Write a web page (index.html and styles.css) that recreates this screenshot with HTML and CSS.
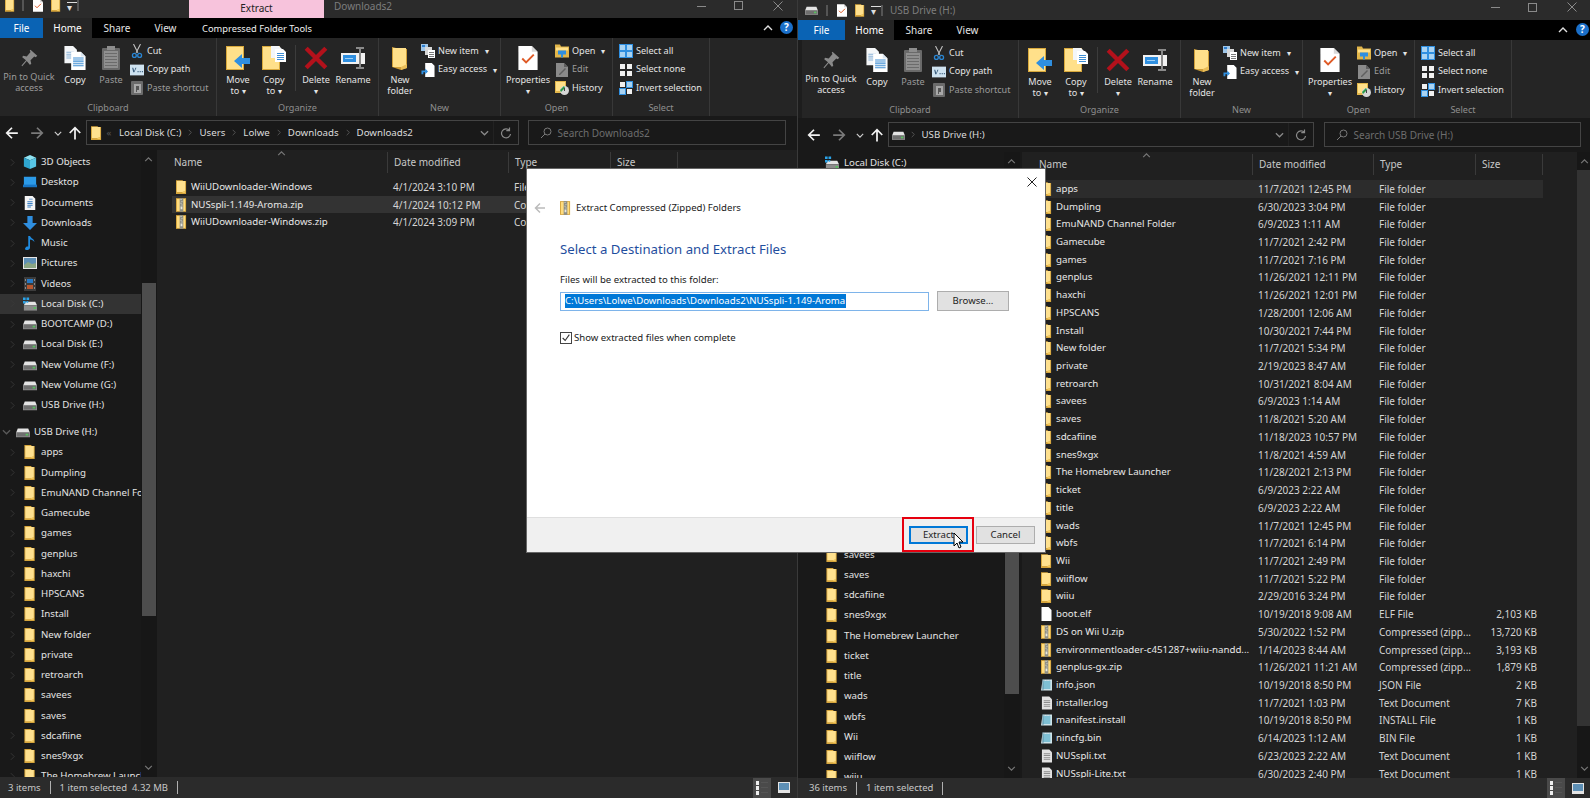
FILE: index.html
```html
<!DOCTYPE html>
<html lang="en">
<head>
<meta charset="utf-8">
<title>Extract Compressed (Zipped) Folders</title>
<link rel="stylesheet" href="styles.css">
</head>
<body>
<svg class="defs" aria-hidden="true">
  <symbol id="folder" viewBox="0 0 12 15"><path fill="#d6a53c" d="M0 0h7l1 1h3v14H0z"/><path fill="#ffe18f" d="M1 1h9v11l-3 1H1z"/><path fill="#f4c95e" d="M7 13l3-1v2H7z"/></symbol>
  <symbol id="zip" viewBox="0 0 12 15"><path fill="#d6a53c" d="M0 0h11v15H0z"/><path fill="#ffdc7e" d="M1 1h9v13H1z"/><path fill="#8f8f85" d="M4 0h4v15H4z"/><path fill="#e8e8de" d="M5 1h1v1H5zm1 2h1v1H6zM5 5h1v1H5zm1 2h1v1H6zM5 9h2v3H5z"/></symbol>
  <symbol id="drive" viewBox="0 0 16 12"><path fill="#e4e4e4" d="M2 2h12l2 5H0z"/><rect y="6" width="16" height="6" fill="#8c8c8c"/><rect x="1" y="7" width="14" height="4" fill="#6f6f6f"/><rect x="11" y="8" width="3" height="2" fill="#58c05f"/></symbol>
  <symbol id="windrive" viewBox="0 0 16 15"><path fill="#e4e4e4" d="M3 5h11l2 4H1z"/><rect y="9" x="1" width="15" height="6" fill="#8c8c8c"/><rect x="12" y="11" width="3" height="2" fill="#58c05f"/><path fill="#2ba3e8" d="M0 0h3v3H0zm4 0h3v3H4zM0 4h3v3H0zm4 0h2v2H4z"/></symbol>
  <symbol id="cube" viewBox="0 0 16 16"><path fill="#8fe3f2" d="M8 0l7 3-7 3-7-3z"/><path fill="#2fa5cf" d="M1 3l7 3v10l-7-3z"/><path fill="#58c6e6" d="M15 3L8 6v10l7-3z"/></symbol>
  <symbol id="desktop" viewBox="0 0 16 12"><rect width="14" height="10" x="1" fill="#2c9be8"/><rect y="9" x="0" width="16" height="3" fill="#1775c4"/></symbol>
  <symbol id="docs" viewBox="0 0 12 16"><path fill="#f5f5f5" d="M0 0h9l3 3v13H0z"/><path fill="#3a7fc4" d="M5 3h4v1H5zM3 6h6v1H3zM3 8h6v1H3zM3 10h6v1H3zM3 12h4v1H3z"/></symbol>
  <symbol id="down" viewBox="0 0 16 16"><path fill="#2f8fe0" d="M5 0h6v8h5l-8 8-8-8h5z"/></symbol>
  <symbol id="music" viewBox="0 0 12 16"><path fill="#1f8be0" d="M4 0h2c1 3 5 3 5 7-1-2-3-3-5-3v9c0 2-2 3-4 3s-2-2-1-3c1-1 2-1 3-1z"/></symbol>
  <symbol id="pics" viewBox="0 0 14 12"><rect width="14" height="12" fill="#e6e6e6"/><rect x="1" y="1" width="12" height="10" fill="#5d8fb5"/><path fill="#8aa583" d="M1 8l4-3 4 2 4-1v5H1z"/></symbol>
  <symbol id="video" viewBox="0 0 12 14"><rect width="12" height="14" fill="#3c3c3c"/><path fill="#2779c4" d="M3 2h6v4H3z"/><path fill="#b7572f" d="M3 8h6v4H3z"/><path fill="#8a8a8a" d="M1 2h1v2H1zm0 4h1v2H1zm0 4h1v2H1zm9-8h1v2h-1zm0 4h1v2h-1zm0 4h1v2h-1z"/></symbol>
  <symbol id="file" viewBox="0 0 10 14"><path fill="#fff" d="M0 0h7l3 3v11H0z"/></symbol>
  <symbol id="note" viewBox="0 0 12 14"><path fill="#e2e2e2" d="M1 0h8l3 3v11H1z"/><path fill="#8d8d8d" d="M3 4h7v1H3zm0 2h7v1H3zm0 2h7v1H3zm0 2h7v1H3z"/></symbol>
  <symbol id="ini" viewBox="0 0 14 14"><path fill="#cfe4ea" d="M2 0h12v14H0z"/><path fill="#7fc0d4" d="M3 2h9v10H2z"/><path fill="#4f7f95" d="M2 0h1v14H2zM4 0h1v1H4zm3 0h1v1H7zm3 0h1v1h-1z"/></symbol>
  <symbol id="chev" viewBox="0 0 6 10"><path fill="none" stroke="currentColor" d="M1 1l4 4-4 4"/></symbol>
  <symbol id="chevd" viewBox="0 0 10 6"><path fill="none" stroke="currentColor" stroke-width="1.4" d="M1 1l4 4 4-4"/></symbol>
  <symbol id="chevu" viewBox="0 0 10 6"><path fill="none" stroke="currentColor" stroke-width="1.4" d="M1 5l4-4 4 4"/></symbol>
  <symbol id="pin" viewBox="0 0 24 24"><path fill="#8a8a8a" d="M14 1l9 8-2 2-2-1-5 5 1 5-2 1-4-5-6 7-1-1 6-7-5-4 1-2 5 1 5-6-1-2z"/></symbol>
  <symbol id="copyb" viewBox="0 0 22 25"><path fill="#f4f6f8" d="M0 0h9l4 4v14H0z"/><path fill="#8cb4d8" d="M2 6h8v1H2zm0 2h8v1H2zm0 2h8v1H2zm0 2h8v1H2z"/><path fill="#fff" d="M7 6h10l5 5v14H7z"/><path fill="#dbe7f2" d="M17 6l5 5h-5z"/><path fill="#3f8ed4" d="M9 12h11v1H9zm0 2h11v1H9zm0 2h11v1H9zm0 2h11v1H9zm0 2h11v1H9z"/></symbol>
  <symbol id="paste" viewBox="0 0 18 24"><rect y="2" width="18" height="22" rx="1" fill="#6a6a6a"/><rect x="5" width="8" height="4" fill="#8d8d8d"/><rect x="2" y="5" width="14" height="17" fill="#8f8f8f"/><path fill="#6b6b6b" d="M3 7h12v1H3zm0 3h12v1H3zm0 3h12v1H3zm0 3h12v1H3zm0 3h12v1H3z"/></symbol>
  <symbol id="cut" viewBox="0 0 12 16"><path fill="none" stroke="#c4c4c4" stroke-width="1.2" d="M2 0l5 10M10 0L5 10"/><circle cx="3" cy="13" r="2.2" fill="none" stroke="#2a86d4" stroke-width="1.5"/><circle cx="9" cy="13" r="2.2" fill="none" stroke="#2a86d4" stroke-width="1.5"/></symbol>
  <symbol id="cpath" viewBox="0 0 13 10"><rect width="13" height="10" fill="#cfe3f1"/><path fill="#3b5e7e" d="M2 3h1l1 3 1-3h1L4 7H3zM7 6h1v1H7zm2 0h1v1H9zm2 0h1v1h-1z"/></symbol>
  <symbol id="pshort" viewBox="0 0 12 14"><rect width="12" height="14" y="0" rx="1" fill="#6b6b6b"/><rect x="3" y="3" width="7" height="9" fill="#a8a8a8"/><path fill="#555" d="M5 5h3v4H6v2H5z"/></symbol>
  <symbol id="moveto" viewBox="0 0 24 24"><path fill="#d9a93c" d="M0 0h18v24H0z"/><path fill="#ffe08a" d="M1 1h16v22H1z"/><path fill="#2f8fe0" d="M8 15l8-7v4h8v6h-8v4z"/></symbol>
  <symbol id="copyto" viewBox="0 0 24 24"><path fill="#d9a93c" d="M0 0h18v24H0z"/><path fill="#ffe08a" d="M1 1h16v22H1z"/><path fill="#f3f6f9" d="M9 0h8l3 3v9H9z"/><path fill="#fff" d="M13 3h8l3 3v10H13z"/><path fill="#3f8ed4" d="M15 7h7v1h-7zm0 2h7v1h-7zm0 2h7v1h-7zm0 2h7v1h-7z"/></symbol>
  <symbol id="del" viewBox="0 0 22 22"><path fill="none" stroke="#b3111b" stroke-width="4" d="M2 2l18 18M20 2L2 20"/></symbol>
  <symbol id="rename" viewBox="0 0 24 22"><rect y="6" width="24" height="11" fill="#f2f2f2"/><rect x="2" y="8" width="13" height="7" fill="#2f8fe0"/><path fill="#9fd0f5" d="M4 11h8v1H4z"/><path fill="#8a8a8a" d="M15 0h8v2h-3v18h3v2h-8v-2h3V2h-3z"/></symbol>
  <symbol id="newfolder" viewBox="0 0 16 24"><path fill="#cf9f3a" d="M0 1l8 2h7v19l-6 2-9-3z"/><path fill="#ffe08a" d="M1 2h13v19H1z"/><path fill="#e9bd58" d="M9 21l6-3v4l-6 2z"/></symbol>
  <symbol id="newitem" viewBox="0 0 14 14"><rect width="7" height="7" fill="#9fc6e8"/><rect x="4" y="3" width="7" height="8" fill="#d8d8d8"/><rect x="7" y="6" width="7" height="8" fill="#fff"/><path fill="#7a7a7a" d="M8 8h5v1H8zm0 2h5v1H8zm0 2h5v1H8z"/><path fill="#2f7fd0" d="M1 1h3v2H1z"/></symbol>
  <symbol id="easy" viewBox="0 0 14 15"><path fill="#fff" d="M4 0h7l3 3v12H4z"/><path fill="#2f8fe0" d="M0 8h4V6l3 3-3 3v-2H2v2H0z"/></symbol>
  <symbol id="prop" viewBox="0 0 20 25"><path fill="#fff" d="M0 0h14l6 6v19H0z"/><path fill="#d8d8d8" d="M14 0l6 6h-6z"/><path fill="none" stroke="#df5a26" stroke-width="2" d="M4 13l4 4 8-8"/></symbol>
  <symbol id="open" viewBox="0 0 14 13"><path fill="#e2b64a" d="M0 0h5l1 2h8v11H0z"/><path fill="#ffe08a" d="M1 3h12v3H1z"/><path fill="#2f8fe0" d="M3 6h8v4H8v3H6v-3H3z"/></symbol>
  <symbol id="edit" viewBox="0 0 12 14"><path fill="#8a8a8a" d="M0 0h8l4 4v10H0z"/><path fill="#5f5f5f" d="M8 0l4 4H8zM3 11l6-6 1 1-6 6H3z"/></symbol>
  <symbol id="hist" viewBox="0 0 14 14"><path fill="#e2b64a" d="M0 0h11v12H0z"/><path fill="#ffe08a" d="M1 1h9v9H1z"/><circle cx="9.5" cy="9.5" r="4.5" fill="#d6d6d6"/><path fill="#2c9a4a" d="M5 9l4-4 1 2-4 4z"/><path fill="#444" d="M9 7h1v3H9z"/></symbol>
  <symbol id="selall" viewBox="0 0 14 14"><rect width="14" height="14" fill="#2f8fe0"/><path fill="#a9d3f2" d="M1 1h5v5H1zm7 0h5v5H8zM1 8h5v5H1zm7 0h5v5H8z"/></symbol>
  <symbol id="selnone" viewBox="0 0 14 14"><path fill="#f0f0f0" d="M1 1h5v5H1zm7 0h5v5H8zM1 8h5v5H1zm7 0h5v5H8z"/></symbol>
  <symbol id="selinv" viewBox="0 0 14 14"><path fill="#2f8fe0" d="M7 0h7v7H7zM0 7h7v7H0z"/><path fill="#a9d3f2" d="M8 1h5v5H8zM1 8h5v5H1z"/><path fill="#f0f0f0" d="M1 1h5v5H1zm7 7h5v5H8z"/></symbol>
  <symbol id="back" viewBox="0 0 12 12"><path fill="none" stroke="currentColor" stroke-width="1.5" d="M11 6H1.5M6 1.5L1.5 6 6 10.5"/></symbol>
  <symbol id="fwd" viewBox="0 0 12 12"><path fill="none" stroke="currentColor" stroke-width="1.5" d="M1 6h9.5M6 1.5L10.5 6 6 10.5"/></symbol>
  <symbol id="up" viewBox="0 0 12 12"><path fill="none" stroke="currentColor" stroke-width="1.5" d="M6 11.5V1.5M1.5 6L6 1.5 10.5 6"/></symbol>
  <symbol id="refresh" viewBox="0 0 12 12"><path fill="none" stroke="currentColor" stroke-width="1.2" d="M9.5 3.5A4.5 4.5 0 1 0 10.5 7M9.5 .5v3.2H6.3"/></symbol>
  <symbol id="search" viewBox="0 0 12 12"><circle cx="7.5" cy="4.5" r="3.5" fill="none" stroke="currentColor"/><path stroke="currentColor" d="M5 7l-4 4"/></symbol>
  <symbol id="close" viewBox="0 0 10 10"><path fill="none" stroke="currentColor" d="M.5.5l9 9M9.5.5l-9 9"/></symbol>
  <symbol id="vdet" viewBox="0 0 12 14"><path fill="#eee" d="M0 0h3v4H0zm0 5h3v4H0zm0 5h3v4H0z"/><path fill="#555" d="M5 1h7v1H5zm0 5h7v1H5zm0 5h7v1H5z"/></symbol>
  <symbol id="vtile" viewBox="0 0 12 11"><rect width="12" height="11" fill="#e4e4e4"/><rect x="1" y="1" width="10" height="7" fill="#5d8fb5"/></symbol>
</svg>

<main class="desktop">

<section class="win win-a">
  <header class="title">
    <svg class="ti f"><use href="#folder"/></svg><i class="tsep"></i>
    <svg class="ti p"><use href="#prop"/></svg>
    <svg class="ti f"><use href="#folder"/></svg>
    <span class="qat">▾</span><i class="tsep"></i>
    <div class="ctx">Extract</div>
    <span class="ttext dim">Downloads2</span>
    <div class="caps">
      <i class="cap-min"></i><i class="cap-max"></i><svg class="cap-x"><use href="#close"/></svg>
    </div>
  </header>
  <nav class="tabs">
    <span class="tab file">File</span><span class="tab home">Home</span><span class="tab share">Share</span><span class="tab view">View</span>
    <span class="tab tools">Compressed Folder Tools</span>
    <span class="tabs-end"><svg class="collapse"><use href="#chevu"/></svg><b class="help">?</b></span>
  </nav>
  <div class="ribbon">
    <div class="grp g-clip">
      <div class="gbody">
        <div class="big w-pin dis"><svg class="bi bi-pin"><use href="#pin"/></svg><span>Pin to Quick<br>access</span></div>
        <div class="big w-copy"><svg class="bi"><use href="#copyb"/></svg><span>Copy</span></div>
        <div class="big w-paste dis"><svg class="bi"><use href="#paste"/></svg><span>Paste</span></div>
        <div class="smalls">
          <div class="sm"><svg class="si"><use href="#cut"/></svg>Cut</div>
          <div class="sm"><svg class="si"><use href="#cpath"/></svg>Copy path</div>
          <div class="sm dis"><svg class="si"><use href="#pshort"/></svg>Paste shortcut</div>
        </div>
      </div>
      <div class="glabel">Clipboard</div>
    </div>
    <div class="grp g-org">
      <div class="gbody">
        <div class="big w-move"><svg class="bi"><use href="#moveto"/></svg><span>Move<br>to <em>▾</em></span></div>
        <div class="big w-move"><svg class="bi"><use href="#copyto"/></svg><span>Copy<br>to <em>▾</em></span></div>
        <i class="vsep"></i>
        <div class="big w-move"><svg class="bi"><use href="#del"/></svg><span>Delete<br><em>▾</em></span></div>
        <div class="big w-ren"><svg class="bi"><use href="#rename"/></svg><span>Rename</span></div>
      </div>
      <div class="glabel">Organize</div>
    </div>
    <div class="grp g-new">
      <div class="gbody">
        <div class="big w-move"><svg class="bi"><use href="#newfolder"/></svg><span>New<br>folder</span></div>
        <div class="smalls s-new">
          <div class="sm"><svg class="si"><use href="#newitem"/></svg>New item <em>▾</em></div>
          <div class="sm"><svg class="si"><use href="#easy"/></svg>Easy access <em>▾</em></div>
        </div>
      </div>
      <div class="glabel">New</div>
    </div>
    <div class="grp g-open">
      <div class="gbody">
        <div class="big w-prop"><svg class="bi"><use href="#prop"/></svg><span>Properties<br><em>▾</em></span></div>
        <div class="smalls s-open">
          <div class="sm"><svg class="si"><use href="#open"/></svg>Open <em>▾</em></div>
          <div class="sm dis"><svg class="si"><use href="#edit"/></svg>Edit</div>
          <div class="sm"><svg class="si"><use href="#hist"/></svg>History</div>
        </div>
      </div>
      <div class="glabel">Open</div>
    </div>
    <div class="grp g-sel">
      <div class="gbody">
        <div class="smalls s-sel">
          <div class="sm"><svg class="si"><use href="#selall"/></svg>Select all</div>
          <div class="sm"><svg class="si"><use href="#selnone"/></svg>Select none</div>
          <div class="sm"><svg class="si"><use href="#selinv"/></svg>Invert selection</div>
        </div>
      </div>
      <div class="glabel">Select</div>
    </div>
  </div>
  <div class="addr">
    <div class="arrows">
      <svg class="ar on"><use href="#back"/></svg><svg class="ar"><use href="#fwd"/></svg><svg class="ar-d"><use href="#chevd"/></svg><svg class="ar on"><use href="#up"/></svg>
    </div>
    <div class="box pathbox">
      <svg class="ai"><use href="#folder"/></svg><span class="cr dimmer">«</span>
      <span>Local Disk (C:)</span><svg class="crumb"><use href="#chev"/></svg>
      <span>Users</span><svg class="crumb"><use href="#chev"/></svg>
      <span>Lolwe</span><svg class="crumb"><use href="#chev"/></svg>
      <span>Downloads</span><svg class="crumb"><use href="#chev"/></svg>
      <span>Downloads2</span>
      <span class="boxend"><svg class="bd"><use href="#chevd"/></svg><i class="bs"></i><svg class="br"><use href="#refresh"/></svg></span>
    </div>
    <div class="box search"><svg class="sic"><use href="#search"/></svg><span>Search Downloads2</span></div>
  </div>
  <div class="work">
    <aside class="tree tree-a">
      <div class="tscroll">
        <ul class="nodes">
          <li><svg class="cv"><use href="#chev"/></svg><svg class="ni"><use href="#cube"/></svg>3D Objects</li>
          <li><svg class="cv"><use href="#chev"/></svg><svg class="ni"><use href="#desktop"/></svg>Desktop</li>
          <li><svg class="cv"><use href="#chev"/></svg><svg class="ni"><use href="#docs"/></svg>Documents</li>
          <li><svg class="cv"><use href="#chev"/></svg><svg class="ni"><use href="#down"/></svg>Downloads</li>
          <li><svg class="cv"><use href="#chev"/></svg><svg class="ni"><use href="#music"/></svg>Music</li>
          <li><svg class="cv"><use href="#chev"/></svg><svg class="ni"><use href="#pics"/></svg>Pictures</li>
          <li><svg class="cv"><use href="#chev"/></svg><svg class="ni"><use href="#video"/></svg>Videos</li>
          <li class="cur"><svg class="cv"><use href="#chev"/></svg><svg class="ni"><use href="#windrive"/></svg>Local Disk (C:)</li>
          <li><svg class="cv"><use href="#chev"/></svg><svg class="ni"><use href="#drive"/></svg>BOOTCAMP (D:)</li>
          <li><svg class="cv"><use href="#chev"/></svg><svg class="ni"><use href="#drive"/></svg>Local Disk (E:)</li>
          <li><svg class="cv"><use href="#chev"/></svg><svg class="ni"><use href="#drive"/></svg>New Volume (F:)</li>
          <li><svg class="cv"><use href="#chev"/></svg><svg class="ni"><use href="#drive"/></svg>New Volume (G:)</li>
          <li><svg class="cv"><use href="#chev"/></svg><svg class="ni"><use href="#drive"/></svg>USB Drive (H:)</li>
          <li class="root"><svg class="cvd"><use href="#chevd"/></svg><svg class="ni"><use href="#drive"/></svg>USB Drive (H:)</li>
          <li><svg class="cv"><use href="#chev"/></svg><svg class="ni"><use href="#folder"/></svg>apps</li>
          <li><svg class="cv"><use href="#chev"/></svg><svg class="ni"><use href="#folder"/></svg>Dumpling</li>
          <li><svg class="cv"><use href="#chev"/></svg><svg class="ni"><use href="#folder"/></svg>EmuNAND Channel Folder</li>
          <li><svg class="cv"><use href="#chev"/></svg><svg class="ni"><use href="#folder"/></svg>Gamecube</li>
          <li><svg class="cv"><use href="#chev"/></svg><svg class="ni"><use href="#folder"/></svg>games</li>
          <li><svg class="cv"><use href="#chev"/></svg><svg class="ni"><use href="#folder"/></svg>genplus</li>
          <li><svg class="cv"><use href="#chev"/></svg><svg class="ni"><use href="#folder"/></svg>haxchi</li>
          <li><svg class="cv"><use href="#chev"/></svg><svg class="ni"><use href="#folder"/></svg>HPSCANS</li>
          <li><svg class="cv"><use href="#chev"/></svg><svg class="ni"><use href="#folder"/></svg>Install</li>
          <li><svg class="cv"><use href="#chev"/></svg><svg class="ni"><use href="#folder"/></svg>New folder</li>
          <li><svg class="cv"><use href="#chev"/></svg><svg class="ni"><use href="#folder"/></svg>private</li>
          <li><svg class="cv"><use href="#chev"/></svg><svg class="ni"><use href="#folder"/></svg>retroarch</li>
          <li><span class="cv"></span><svg class="ni"><use href="#folder"/></svg>savees</li>
          <li><span class="cv"></span><svg class="ni"><use href="#folder"/></svg>saves</li>
          <li><svg class="cv"><use href="#chev"/></svg><svg class="ni"><use href="#folder"/></svg>sdcafiine</li>
          <li><svg class="cv"><use href="#chev"/></svg><svg class="ni"><use href="#folder"/></svg>snes9xgx</li>
          <li><svg class="cv"><use href="#chev"/></svg><svg class="ni"><use href="#folder"/></svg>The Homebrew Launcher</li>
        </ul>
      </div>
      <div class="sbar sbar-a"><svg class="sb-u"><use href="#chevu"/></svg><i class="thumb"></i><svg class="sb-d"><use href="#chevd"/></svg></div>
    </aside>
    <div class="list">
      <div class="lhead">
        <span class="hc">Name<svg class="sort"><use href="#chevu"/></svg></span><span class="hc">Date modified</span><span class="hc">Type</span><span class="hc">Size</span>
      </div>
      <div class="rows">
        <div class="row"><span class="n"><svg class="fi"><use href="#folder"/></svg>WiiUDownloader-Windows</span><span>4/1/2024 3:10 PM</span><span>File folder</span><span class="sz"></span></div>
        <div class="row sel"><span class="n"><svg class="fi"><use href="#zip"/></svg>NUSspli-1.149-Aroma.zip</span><span>4/1/2024 10:12 PM</span><span>Compressed (zipp...</span><span class="sz">4,424 KB</span></div>
        <div class="row"><span class="n"><svg class="fi"><use href="#zip"/></svg>WiiUDownloader-Windows.zip</span><span>4/1/2024 3:09 PM</span><span>Compressed (zipp...</span><span class="sz">18,321 KB</span></div>
      </div>
    </div>
  </div>
  <footer class="status">
    <span>3 items</span><i class="bar"></i><span>1 item selected&nbsp; 4.32 MB</span><i class="bar"></i>
    <span class="views"><span class="vb on"><svg class="vd"><use href="#vdet"/></svg></span><span class="vb"><svg class="vt"><use href="#vtile"/></svg></span></span>
  </footer>
</section>

<section class="win win-b">
  <header class="title">
    <svg class="ti d"><use href="#drive"/></svg><i class="tsep"></i>
    <svg class="ti p"><use href="#prop"/></svg>
    <svg class="ti f"><use href="#folder"/></svg>
    <span class="qat">▾</span><i class="tsep"></i>
    <span class="ttext dim">USB Drive (H:)</span>
    <div class="caps">
      <i class="cap-min"></i><i class="cap-max"></i><svg class="cap-x"><use href="#close"/></svg>
    </div>
  </header>
  <nav class="tabs">
    <span class="tab file">File</span><span class="tab home">Home</span><span class="tab share">Share</span><span class="tab view">View</span>
    <span class="tabs-end"><svg class="collapse"><use href="#chevu"/></svg><b class="help">?</b></span>
  </nav>
  <div class="ribbon">
    <div class="grp g-clip">
      <div class="gbody">
        <div class="big w-pin"><svg class="bi bi-pin"><use href="#pin"/></svg><span>Pin to Quick<br>access</span></div>
        <div class="big w-copy"><svg class="bi"><use href="#copyb"/></svg><span>Copy</span></div>
        <div class="big w-paste dis"><svg class="bi"><use href="#paste"/></svg><span>Paste</span></div>
        <div class="smalls">
          <div class="sm"><svg class="si"><use href="#cut"/></svg>Cut</div>
          <div class="sm"><svg class="si"><use href="#cpath"/></svg>Copy path</div>
          <div class="sm dis"><svg class="si"><use href="#pshort"/></svg>Paste shortcut</div>
        </div>
      </div>
      <div class="glabel">Clipboard</div>
    </div>
    <div class="grp g-org">
      <div class="gbody">
        <div class="big w-move"><svg class="bi"><use href="#moveto"/></svg><span>Move<br>to <em>▾</em></span></div>
        <div class="big w-move"><svg class="bi"><use href="#copyto"/></svg><span>Copy<br>to <em>▾</em></span></div>
        <i class="vsep"></i>
        <div class="big w-move"><svg class="bi"><use href="#del"/></svg><span>Delete<br><em>▾</em></span></div>
        <div class="big w-ren"><svg class="bi"><use href="#rename"/></svg><span>Rename</span></div>
      </div>
      <div class="glabel">Organize</div>
    </div>
    <div class="grp g-new">
      <div class="gbody">
        <div class="big w-move"><svg class="bi"><use href="#newfolder"/></svg><span>New<br>folder</span></div>
        <div class="smalls s-new">
          <div class="sm"><svg class="si"><use href="#newitem"/></svg>New item <em>▾</em></div>
          <div class="sm"><svg class="si"><use href="#easy"/></svg>Easy access <em>▾</em></div>
        </div>
      </div>
      <div class="glabel">New</div>
    </div>
    <div class="grp g-open">
      <div class="gbody">
        <div class="big w-prop"><svg class="bi"><use href="#prop"/></svg><span>Properties<br><em>▾</em></span></div>
        <div class="smalls s-open">
          <div class="sm"><svg class="si"><use href="#open"/></svg>Open <em>▾</em></div>
          <div class="sm dis"><svg class="si"><use href="#edit"/></svg>Edit</div>
          <div class="sm"><svg class="si"><use href="#hist"/></svg>History</div>
        </div>
      </div>
      <div class="glabel">Open</div>
    </div>
    <div class="grp g-sel">
      <div class="gbody">
        <div class="smalls s-sel">
          <div class="sm"><svg class="si"><use href="#selall"/></svg>Select all</div>
          <div class="sm"><svg class="si"><use href="#selnone"/></svg>Select none</div>
          <div class="sm"><svg class="si"><use href="#selinv"/></svg>Invert selection</div>
        </div>
      </div>
      <div class="glabel">Select</div>
    </div>
  </div>
  <div class="addr">
    <div class="arrows">
      <svg class="ar on"><use href="#back"/></svg><svg class="ar"><use href="#fwd"/></svg><svg class="ar-d"><use href="#chevd"/></svg><svg class="ar on"><use href="#up"/></svg>
    </div>
    <div class="box pathbox">
      <svg class="ai ai-d"><use href="#drive"/></svg><svg class="crumb"><use href="#chev"/></svg>
      <span>USB Drive (H:)</span>
      <span class="boxend"><svg class="bd"><use href="#chevd"/></svg><i class="bs"></i><svg class="br"><use href="#refresh"/></svg></span>
    </div>
    <div class="box search"><svg class="sic"><use href="#search"/></svg><span>Search USB Drive (H:)</span></div>
  </div>
  <div class="work">
    <aside class="tree tree-b">
      <div class="tscroll">
        <ul class="nodes">
          <li><span class="cv"></span><svg class="ni"><use href="#windrive"/></svg>Local Disk (C:)</li>
          <li><span class="cv"></span><svg class="ni"><use href="#drive"/></svg>BOOTCAMP (D:)</li>
          <li><span class="cv"></span><svg class="ni"><use href="#drive"/></svg>Local Disk (E:)</li>
          <li><span class="cv"></span><svg class="ni"><use href="#drive"/></svg>New Volume (F:)</li>
          <li><span class="cv"></span><svg class="ni"><use href="#drive"/></svg>New Volume (G:)</li>
          <li><span class="cv"></span><svg class="ni"><use href="#drive"/></svg>USB Drive (H:)</li>
          <li class="root"><span class="cv"></span><svg class="ni"><use href="#drive"/></svg>USB Drive (H:)</li>
          <li><span class="cv"></span><svg class="ni"><use href="#folder"/></svg>apps</li>
          <li><span class="cv"></span><svg class="ni"><use href="#folder"/></svg>Dumpling</li>
          <li><span class="cv"></span><svg class="ni"><use href="#folder"/></svg>EmuNAND Channel Folder</li>
          <li><span class="cv"></span><svg class="ni"><use href="#folder"/></svg>Gamecube</li>
          <li><span class="cv"></span><svg class="ni"><use href="#folder"/></svg>games</li>
          <li><span class="cv"></span><svg class="ni"><use href="#folder"/></svg>genplus</li>
          <li><span class="cv"></span><svg class="ni"><use href="#folder"/></svg>haxchi</li>
          <li><span class="cv"></span><svg class="ni"><use href="#folder"/></svg>HPSCANS</li>
          <li><span class="cv"></span><svg class="ni"><use href="#folder"/></svg>Install</li>
          <li><span class="cv"></span><svg class="ni"><use href="#folder"/></svg>New folder</li>
          <li><span class="cv"></span><svg class="ni"><use href="#folder"/></svg>private</li>
          <li><span class="cv"></span><svg class="ni"><use href="#folder"/></svg>retroarch</li>
          <li><span class="cv"></span><svg class="ni"><use href="#folder"/></svg>savees</li>
          <li><span class="cv"></span><svg class="ni"><use href="#folder"/></svg>saves</li>
          <li><span class="cv"></span><svg class="ni"><use href="#folder"/></svg>sdcafiine</li>
          <li><span class="cv"></span><svg class="ni"><use href="#folder"/></svg>snes9xgx</li>
          <li><span class="cv"></span><svg class="ni"><use href="#folder"/></svg>The Homebrew Launcher</li>
          <li><span class="cv"></span><svg class="ni"><use href="#folder"/></svg>ticket</li>
          <li><span class="cv"></span><svg class="ni"><use href="#folder"/></svg>title</li>
          <li><span class="cv"></span><svg class="ni"><use href="#folder"/></svg>wads</li>
          <li><span class="cv"></span><svg class="ni"><use href="#folder"/></svg>wbfs</li>
          <li><span class="cv"></span><svg class="ni"><use href="#folder"/></svg>Wii</li>
          <li><span class="cv"></span><svg class="ni"><use href="#folder"/></svg>wiiflow</li>
          <li><span class="cv"></span><svg class="ni"><use href="#folder"/></svg>wiiu</li>
        </ul>
      </div>
      <div class="sbar sbar-b"><svg class="sb-u"><use href="#chevu"/></svg><i class="thumb"></i><svg class="sb-d"><use href="#chevd"/></svg></div>
    </aside>
    <div class="list">
      <div class="lhead">
        <span class="hc">Name<svg class="sort"><use href="#chevu"/></svg></span><span class="hc">Date modified</span><span class="hc">Type</span><span class="hc">Size</span>
      </div>
      <div class="rows">
        <div class="row hov"><span class="n"><svg class="fi"><use href="#folder"/></svg>apps</span><span>11/7/2021 12:45 PM</span><span>File folder</span><span class="sz"></span></div>
        <div class="row"><span class="n"><svg class="fi"><use href="#folder"/></svg>Dumpling</span><span>6/30/2023 3:04 PM</span><span>File folder</span><span class="sz"></span></div>
        <div class="row"><span class="n"><svg class="fi"><use href="#folder"/></svg>EmuNAND Channel Folder</span><span>6/9/2023 1:11 AM</span><span>File folder</span><span class="sz"></span></div>
        <div class="row"><span class="n"><svg class="fi"><use href="#folder"/></svg>Gamecube</span><span>11/7/2021 2:42 PM</span><span>File folder</span><span class="sz"></span></div>
        <div class="row"><span class="n"><svg class="fi"><use href="#folder"/></svg>games</span><span>11/7/2021 7:16 PM</span><span>File folder</span><span class="sz"></span></div>
        <div class="row"><span class="n"><svg class="fi"><use href="#folder"/></svg>genplus</span><span>11/26/2021 12:11 PM</span><span>File folder</span><span class="sz"></span></div>
        <div class="row"><span class="n"><svg class="fi"><use href="#folder"/></svg>haxchi</span><span>11/26/2021 12:01 PM</span><span>File folder</span><span class="sz"></span></div>
        <div class="row"><span class="n"><svg class="fi"><use href="#folder"/></svg>HPSCANS</span><span>1/28/2001 12:06 AM</span><span>File folder</span><span class="sz"></span></div>
        <div class="row"><span class="n"><svg class="fi"><use href="#folder"/></svg>Install</span><span>10/30/2021 7:44 PM</span><span>File folder</span><span class="sz"></span></div>
        <div class="row"><span class="n"><svg class="fi"><use href="#folder"/></svg>New folder</span><span>11/7/2021 5:34 PM</span><span>File folder</span><span class="sz"></span></div>
        <div class="row"><span class="n"><svg class="fi"><use href="#folder"/></svg>private</span><span>2/19/2023 8:47 AM</span><span>File folder</span><span class="sz"></span></div>
        <div class="row"><span class="n"><svg class="fi"><use href="#folder"/></svg>retroarch</span><span>10/31/2021 8:04 AM</span><span>File folder</span><span class="sz"></span></div>
        <div class="row"><span class="n"><svg class="fi"><use href="#folder"/></svg>savees</span><span>6/9/2023 1:14 AM</span><span>File folder</span><span class="sz"></span></div>
        <div class="row"><span class="n"><svg class="fi"><use href="#folder"/></svg>saves</span><span>11/8/2021 5:20 AM</span><span>File folder</span><span class="sz"></span></div>
        <div class="row"><span class="n"><svg class="fi"><use href="#folder"/></svg>sdcafiine</span><span>11/18/2023 10:57 PM</span><span>File folder</span><span class="sz"></span></div>
        <div class="row"><span class="n"><svg class="fi"><use href="#folder"/></svg>snes9xgx</span><span>11/8/2021 4:59 AM</span><span>File folder</span><span class="sz"></span></div>
        <div class="row"><span class="n"><svg class="fi"><use href="#folder"/></svg>The Homebrew Launcher</span><span>11/28/2021 2:13 PM</span><span>File folder</span><span class="sz"></span></div>
        <div class="row"><span class="n"><svg class="fi"><use href="#folder"/></svg>ticket</span><span>6/9/2023 2:22 AM</span><span>File folder</span><span class="sz"></span></div>
        <div class="row"><span class="n"><svg class="fi"><use href="#folder"/></svg>title</span><span>6/9/2023 2:22 AM</span><span>File folder</span><span class="sz"></span></div>
        <div class="row"><span class="n"><svg class="fi"><use href="#folder"/></svg>wads</span><span>11/7/2021 12:45 PM</span><span>File folder</span><span class="sz"></span></div>
        <div class="row"><span class="n"><svg class="fi"><use href="#folder"/></svg>wbfs</span><span>11/7/2021 6:14 PM</span><span>File folder</span><span class="sz"></span></div>
        <div class="row"><span class="n"><svg class="fi"><use href="#folder"/></svg>Wii</span><span>11/7/2021 2:49 PM</span><span>File folder</span><span class="sz"></span></div>
        <div class="row"><span class="n"><svg class="fi"><use href="#folder"/></svg>wiiflow</span><span>11/7/2021 5:22 PM</span><span>File folder</span><span class="sz"></span></div>
        <div class="row"><span class="n"><svg class="fi"><use href="#folder"/></svg>wiiu</span><span>2/29/2016 3:24 PM</span><span>File folder</span><span class="sz"></span></div>
        <div class="row"><span class="n"><svg class="fi"><use href="#file"/></svg>boot.elf</span><span>10/19/2018 9:08 AM</span><span>ELF File</span><span class="sz">2,103 KB</span></div>
        <div class="row"><span class="n"><svg class="fi"><use href="#zip"/></svg>DS on Wii U.zip</span><span>5/30/2022 1:52 PM</span><span>Compressed (zipp...</span><span class="sz">13,720 KB</span></div>
        <div class="row"><span class="n"><svg class="fi"><use href="#zip"/></svg>environmentloader-c451287+wiiu-nandd...</span><span>1/14/2023 8:44 AM</span><span>Compressed (zipp...</span><span class="sz">3,193 KB</span></div>
        <div class="row"><span class="n"><svg class="fi"><use href="#zip"/></svg>genplus-gx.zip</span><span>11/26/2021 11:21 AM</span><span>Compressed (zipp...</span><span class="sz">1,879 KB</span></div>
        <div class="row"><span class="n"><svg class="fi"><use href="#ini"/></svg>info.json</span><span>10/19/2018 8:50 PM</span><span>JSON File</span><span class="sz">2 KB</span></div>
        <div class="row"><span class="n"><svg class="fi"><use href="#note"/></svg>installer.log</span><span>11/7/2021 1:03 PM</span><span>Text Document</span><span class="sz">7 KB</span></div>
        <div class="row"><span class="n"><svg class="fi"><use href="#ini"/></svg>manifest.install</span><span>10/19/2018 8:50 PM</span><span>INSTALL File</span><span class="sz">1 KB</span></div>
        <div class="row"><span class="n"><svg class="fi"><use href="#ini"/></svg>nincfg.bin</span><span>6/14/2023 1:12 AM</span><span>BIN File</span><span class="sz">1 KB</span></div>
        <div class="row"><span class="n"><svg class="fi"><use href="#note"/></svg>NUSspli.txt</span><span>6/23/2023 2:22 AM</span><span>Text Document</span><span class="sz">1 KB</span></div>
        <div class="row"><span class="n"><svg class="fi"><use href="#note"/></svg>NUSspli-Lite.txt</span><span>6/30/2023 2:40 PM</span><span>Text Document</span><span class="sz">1 KB</span></div>
      </div>
      <div class="sbar sbar-m"><svg class="sb-u"><use href="#chevu"/></svg><i class="thumb"></i><svg class="sb-d"><use href="#chevd"/></svg></div>
    </div>
  </div>
  <footer class="status">
    <span>36 items</span><i class="bar"></i><span>1 item selected</span><i class="bar"></i>
    <span class="views"><span class="vb on"><svg class="vd"><use href="#vdet"/></svg></span><span class="vb"><svg class="vt"><use href="#vtile"/></svg></span></span>
  </footer>
</section>

</main>

<div class="dialog" role="dialog">
  <div class="dclose"><svg class="dx"><use href="#close"/></svg></div>
  <div class="dhead"><svg class="dback"><use href="#back"/></svg><svg class="dzip"><use href="#zip"/></svg><span>Extract Compressed (Zipped) Folders</span></div>
  <div class="dbody">
    <h1 class="dh">Select a Destination and Extract Files</h1>
    <div class="dlabel">Files will be extracted to this folder:</div>
    <div class="drow">
      <div class="dinput"><span class="dsel">C:\Users\Lolwe\Downloads\Downloads2\NUSspli-1.149-Aroma</span></div>
      <span class="btn browse">Browse...</span>
    </div>
    <div class="dcheck"><span class="cb"><svg viewBox="0 0 12 12"><path fill="none" stroke="#333" stroke-width="1.3" d="M2 6l3 3 5-7"/></svg></span>Show extracted files when complete</div>
  </div>
  <div class="dfoot">
    <span class="btn extract">Extract</span><span class="btn cancel">Cancel</span>
    <i class="redbox"></i>
    <svg class="cursor" viewBox="0 0 12 18"><path fill="#fff" stroke="#000" d="M1 1v13l3-3 2 5 2-1-2-5h4z"/></svg>
  </div>
</div>
</body>
</html>
```

FILE: styles.css
```css
* { box-sizing: border-box; }
html, body { margin: 0; height: 100%; }
body {
  position: relative;
  width: 1590px;
  height: 798px;
  overflow: hidden;
  background: #191919;
  font: 10px/1.2 "Noto Sans", "Open Sans", sans-serif;
  color: #e4e4e4;
}
.defs { position: absolute; width: 0; height: 0; }
ul { list-style: none; margin: 0; padding: 0; }
em { font-style: normal; font-size: 8px; }
i { display: block; font-style: normal; }

.desktop { display: flex; height: 798px; }
.win { display: flex; flex-direction: column; height: 798px; overflow: hidden; }
.win-a { width: 798px; border-right: 1px solid #3a3a3a; --inset: 0px; --title: 18px; --status: 21px; --tree: 157px; --titlex: 5px; }
.win-b { width: 792px; --inset: 4px; --title: 20px; --status: 20px; --tree: 220px; --titlex: 7px; }

/* title bar */
.title { flex: none; height: var(--title); background: #2b2b2b; display: flex; align-items: center; position: relative; padding-left: var(--titlex); overflow: visible; }
.win-a .title { align-items: flex-start; }
.ti { display: block; margin-right: 8px; }
.ti.f { width: 10px; height: 13px; }
.win-a .ti { margin-top: -1px; }
.ti.p { width: 10px; height: 13px; }
.ti.d { width: 13px; height: 10px; }
.qat { color: #ddd; font-size: 10px; width: 10px; margin-left: -2px; border-top: 1px solid #ddd; line-height: 8px; height: 10px; margin-top: 2px; }
.tsep { width: 2px; height: 11px; background: #555; margin: 0 9px 0 0; }
.win-a .ti:first-child { margin-right: 7px; }
.win-b .ttext { margin-left: -2px; }
.ctx { position: absolute; left: 189px; top: 0; width: 135px; height: 18px; background: #f7c3dc; color: #222; text-align: center; line-height: 16px; }
.win-a .ttext { position: absolute; left: 334px; top: 0; line-height: 13px; }
.dim { color: #7d7d7d; }
.caps { position: absolute; right: 0; top: 0; width: 110px; height: 100%; }
.cap-min { position: absolute; left: 10px; top: 6px; width: 9px; height: 1px; background: #8a8a8a; }
.cap-max { position: absolute; left: 47px; top: 1px; width: 9px; height: 9px; border: 1px solid #8a8a8a; }
.cap-x { position: absolute; left: 86px; top: 1px; width: 10px; height: 10px; color: #8a8a8a; }
.win-b .cap-min { top: 7px; left: 11px; }
.win-b .cap-max { top: 3px; left: 48px; }
.win-b .cap-x { left: 87px; top: 2px; }

/* tabs */
.tabs { flex: none; height: 20px; background: #000; display: flex; align-items: stretch; position: relative; }
.tab { display: block; text-align: center; line-height: 21px; }
.tab.file { width: 43px; background: #0a63b4; color: #fff; }
.tab.home { width: 49px; background: #252525; color: #fff; }
.win-b .tab.file { width: 47px; }
.tab.share { width: 50px; } .tab.view { width: 47px; }
.tab.tools { position: absolute; left: 190px; width: 134px; color: #f0f0f0; white-space: nowrap; font-size: 9.3px; }
.tabs-end { position: absolute; right: 0; top: 0; height: 100%; }
.collapse { position: absolute; right: 24px; top: 7px; width: 10px; height: 6px; color: #e0e0e0; }
.help { position: absolute; right: 4px; top: 3px; width: 13px; height: 13px; border-radius: 50%; background: #1a6fc9; color: #fff; font-size: 10px; line-height: 13px; text-align: center; }
.win-b .collapse { right: 22px; }
.win-b .help { right: 1px; }

/* ribbon */
.ribbon { flex: none; height: 78px; background: #252525; display: flex; padding-left: var(--inset); font-size: 9.1px; }
.win-b .ribbon { background: linear-gradient(90deg, #1d1d1d 4px, #252525 4px); }
.grp { display: flex; flex-direction: column; border-right: 1px solid #383838; }
.g-clip { width: 217px; } .g-org { width: 162px; } .g-new { width: 122px; } .g-open { width: 112px; } .g-sel { width: 97px; }
.gbody { flex: none; height: 61px; display: flex; }
.glabel { text-align: center; color: #8f8f8f; line-height: 16px; padding-top: 1px; }
.big { text-align: center; padding-top: 8px; line-height: 11.3px; flex: none; }
.big span { display: block; margin-top: 4px; white-space: nowrap; }
.bi { display: block; width: 24px; height: 24px; margin: 0 auto; }
.bi-pin { width: 18px; height: 18px; margin: 3px auto; }
.w-pin { width: 56px; margin-left: 1px; } .w-copy { width: 36px; } .w-paste { width: 36px; }
.w-move { width: 36px; } .w-ren { width: 38px; } .w-prop { width: 50px; }
.g-org .gbody, .g-new .gbody { padding-left: 3px; }
.g-open .gbody { padding-left: 2px; }
.vsep { width: 1px; height: 46px; background: #3c3c3c; margin: 7px 2px 0 3px; flex: none; }
.dis { color: #9c9c9c; }
.smalls { padding: 4px 0 0 1px; }
.s-new { padding-left: 3px; } .s-open { padding-left: 2px; } .s-sel { padding-left: 6px; }
.sm { display: flex; align-items: center; height: 18.5px; white-space: nowrap; gap: 3px; }
.sm em { margin-left: 3px; }
.si { width: 14px; height: 14px; flex: none; }

/* address bar */
.addr { flex: none; height: 34px; background: #191919; display: flex; padding: 4px 0 4px var(--inset); position: relative; }
.arrows { width: 85.5px; flex: none; display: flex; align-items: center; padding-left: 5px; color: #7a7a7a; }
.ar { width: 14px; height: 14px; margin-right: 11px; flex: none; }
.ar:last-child { margin-right: 0; }
.ar.on { color: #f2f2f2; }
.ar-d { width: 8px; height: 5px; color: #d0d0d0; margin: 0 6px 0 -1px; flex: none; }
.box { border: 1px solid #444; height: 25px; display: flex; align-items: center; flex: none; position: relative; }
.pathbox { width: 433px; padding-left: 4px; gap: 0; color: #dcdcdc; font-size: 9.7px; }
.win-b .pathbox { width: 426px; padding-left: 3px; }
.ai { width: 11px; height: 14px; margin-right: 5px; }
.ai-d { width: 13px; height: 10px; margin-right: 0; }
.cr { width: 12.5px; color: #555; }
.crumb { width: 4px; height: 7px; margin: 0 7px; color: #6e6e6e; }
.win-b .crumb { margin: 0 6.5px; }
.boxend { position: absolute; right: 0; top: 0; height: 100%; width: 38px; }
.bd { position: absolute; left: 0; top: 9px; width: 9px; height: 6px; color: #8a8a8a; }
.bs { position: absolute; left: 13px; top: 0; height: 100%; width: 1px; background: #222; }
.br { position: absolute; left: 20px; top: 6px; width: 12px; height: 12px; color: #8a8a8a; }
.search { margin-left: 9px; width: 258px; padding-left: 11px; color: #6d6d6d; }
.win-b .search { margin-left: 10px; width: 257px; }
.sic { width: 12px; height: 12px; margin-right: 6px; color: #7a7a7a; }

/* work area */
.work { flex: 1 1 0; min-height: 0; display: flex; padding-left: var(--inset); }
.tree { flex: none; width: var(--tree); background: #191919; display: flex; overflow: hidden; font-size: 9.7px; }
.tscroll { flex: 1 1 0; min-width: 0; overflow: hidden; padding-top: 2px; }
.win-b .tscroll { padding-top: 1px; }
.nodes li { height: 20.25px; display: flex; align-items: center; padding-left: 10px; white-space: nowrap; line-height: 18px; }
.nodes li.cur { background: #333; }
.nodes li.root { margin-top: 6.75px; padding-left: 2px; }
.cv { width: 5px; height: 9px; color: #3b3b3b; flex: none; margin-right: 8px; }
.cvd { width: 9px; height: 6px; color: #5a5a5a; margin-right: 5px; flex: none; }
.ni { width: 14px; height: 14px; flex: none; margin-right: 4px; }
.tree-b .nodes li .cv { margin-right: 10px; width: 3px; }
.tree-b .nodes li.root .cv { margin-right: 0; }
.tree-b .nodes li.root { padding-left: 0; }
.tree-b .ni { margin-right: 5px; }
.sbar { flex: none; width: 15px; background: #171717; position: relative; }
.sb-u, .sb-d { position: absolute; left: 3px; width: 9px; height: 5px; color: #777; }
.sb-u { top: 7px; } .sb-d { bottom: 7px; }
.thumb { position: absolute; left: 1px; right: 1px; background: #4d4d4d; }
.sbar-a { width: 16px; }
.sbar-a .thumb { top: 133px; height: 333px; }
.sbar-b { width: 16px; margin-right: 2px; }
.sbar-b .thumb { top: 24px; bottom: 84px; }
.sbar-m { position: absolute; right: 0; top: 0; bottom: 0; width: 13px; }
.sbar-m .thumb { top: 18px; bottom: 52px; left: 0; right: 0; background: #333; }

/* list */
.list { flex: 1 1 0; min-width: 0; background: #202020; position: relative; overflow: hidden; padding-top: 2px; --pl: 15px; }
.lhead, .row { display: grid; grid-template-columns: 216px 121px 102px 67px; margin-left: var(--pl); width: 506px; white-space: nowrap; }
.lhead { height: 21px; align-items: center; color: #c8c8c8; }
.hc { position: relative; height: 21px; line-height: 20px; padding-left: 6px; border-right: 1px solid #3a3a3a; }
.hc:first-child { padding-left: 2px; }
.sort { position: absolute; left: 105px; top: -1px; width: 9px; height: 5px; color: #777; }
.rows { padding-top: 5px; }
.row { height: 17.72px; align-items: center; line-height: 16px; color: #d4d4d4; }
.row > span { padding-left: 5px; overflow: hidden; }
.row > .n { padding-left: 4px; display: flex; align-items: center; color: #e8e8e8; font-size: 9.7px; }
.row > .sz { padding: 0 6px 0 0; text-align: right; }
.row.sel { background: #333; }
.row.hov { background: #2c2c2c; }
.fi { width: 11px; height: 14px; margin-right: 4px; flex: none; }

/* status */
.status { flex: none; height: var(--status); background: #2b2b2b; display: flex; align-items: center; padding-left: 8px; position: relative; color: #c8c8c8; font-size: 9.5px; }
.win-b .status { padding-left: 11px; }
.bar { width: 1px; height: 13px; background: #b0b0b0; margin: 0 9px; }
.views { position: absolute; right: 3px; top: 0; height: 100%; display: flex; align-items: center; gap: 4px; }
.win-a .views { right: 4px; }
.vb { width: 18px; height: 20px; display: flex; align-items: center; justify-content: center; }
.vb.on { background: #4a4a4a; }
.vd { width: 12px; height: 14px; } .vt { width: 12px; height: 11px; }

/* dialog */
.dialog { position: absolute; left: 527px; top: 169px; width: 518px; height: 383px; background: #fff; color: #1a1a1a; display: flex; flex-direction: column; box-shadow: 0 0 0 1px #666; font-size: 9.6px; }
.dclose { position: absolute; right: 8px; top: 8px; width: 10px; height: 10px; color: #222; }
.dx { display: block; width: 10px; height: 10px; }
.dhead { display: flex; align-items: center; height: 16px; margin-top: 31px; padding-left: 7px; }
.dback { width: 12px; height: 12px; color: #bbb; margin-right: 14px; }
.dzip { width: 11px; height: 14px; margin-right: 5px; }
.dbody { flex: 1 1 0; padding: 23px 0 0 33px; }
.dh { margin: 0; font-size: 13.2px; font-weight: 400; color: #1f4e9e; line-height: 20px; }
.dlabel { margin-top: 13px; line-height: 16px; }
.drow { display: flex; gap: 8px; margin-top: 3px; height: 20px; }
.dinput { width: 369px; height: 19px; border: 1px solid #7eb4ea; padding: 1px 0 0 4px; margin-top: 1px; }
.dsel { display: block; width: 281px; height: 14px; line-height: 14px; background: #0078d7; color: #fff; white-space: nowrap; }
.btn { display: block; text-align: center; background: #e1e1e1; border: 1px solid #adadad; color: #222; }
.browse { width: 72px; height: 20px; line-height: 18px; }
.dcheck { display: flex; align-items: center; margin-top: 20px; line-height: 14px; gap: 2px; }
.cb { display: block; width: 12px; height: 12px; border: 1px solid #444; }
.cb svg { display: block; width: 10px; height: 10px; }
.dfoot { flex: none; height: 35px; background: #f0f0f0; border-top: 1px solid #dfdfdf; display: flex; align-items: center; justify-content: flex-end; padding-right: 10px; gap: 8px; position: relative; }
.extract, .cancel { width: 59px; height: 18px; line-height: 16px; }
.extract { border: 2px solid #0078d7; line-height: 14px; }
.redbox { position: absolute; left: 375px; top: -1px; width: 72px; height: 35px; border: 2px solid #e6000f; }
.cursor { position: absolute; left: 426px; top: 14px; width: 12px; height: 18px; }
```
